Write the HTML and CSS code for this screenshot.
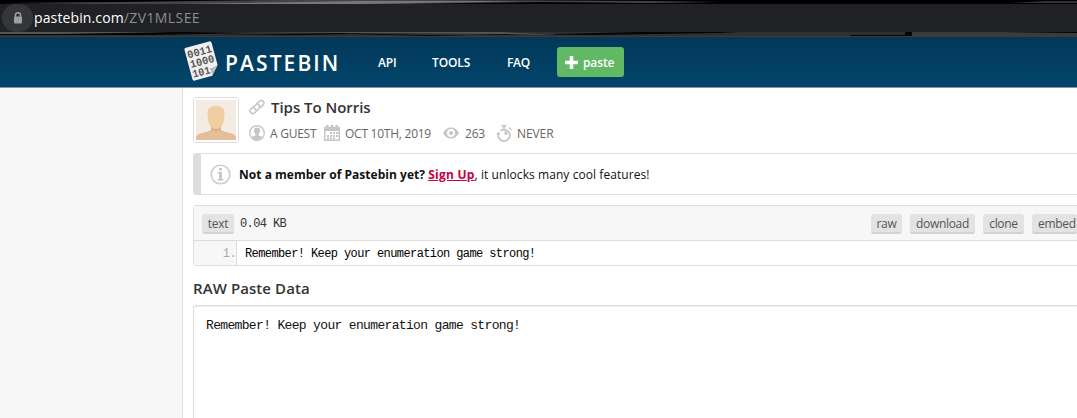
FILE: index.html
```
<!DOCTYPE html>
<html lang="en">
<head>
<meta charset="utf-8">
<title>Tips To Norris - Pastebin.com</title>
<link rel="stylesheet" href="styles.css">
</head>
<body>
<div class="browser">
  <svg class="streaks" width="1077" height="4" viewBox="0 0 1077 4" preserveAspectRatio="none"><path fill="#000" d="M0 0h1077v4H0z"/><path fill="#444" d="M0 3 120 2 280 0H430L650 1 720 2 650 3 540 2 400 4H90z"/><path fill="#777" d="M360 1h160l-40 1-120 2H180z"/><path fill="#333" d="M1010 3 1045 1h32v2z"/></svg>
  <div class="address">
    <span class="lock"><svg width="10" height="12" viewBox="0 0 10 12"><path d="M2.4 5V3.4a2.6 2.6 0 0 1 5.2 0V5" fill="none" stroke="#9aa0a6" stroke-width="1.4"/><rect x="1" y="4.500" width="8" height="7" rx="1" fill="#9aa0a6"/></svg></span>
    <span class="url"><span class="host">pastebin.com</span><span class="path">/ZV1MLSEE</span></span>
  </div>
  <svg class="streaks" width="1077" height="5" viewBox="0 0 1077 5" preserveAspectRatio="none"><path fill="#303030" d="M0 0h1077v5H0z"/><path fill="#050505" d="M0 1 190 0 250 1 150 3H0zM220 3 340 1 420 3H510L640 0H740L720 1 590 3 510 2 430 4 350 2 300 3zM850 3h55V0h7v4H850z"/><path fill="#555" d="M250 1 350 0H500L560 3 500 2 400 1zM0 0h170L60 2H0z"/><path fill="#3b3b3b" d="M912 0h165v4H912z"/><path fill="#000" d="m1000 0h77v1z"/><path fill="#3b3b3b" d="M0 4h1077v1H0z"/></svg>
</div>
<header class="header">
  <svg class="logo" width="38" height="42" viewBox="0 0 38 42"><g transform="rotate(-15 19 21)"><path d="M6 4h25a2 2 0 0 1 2 2v23l-8 9H7a2 2 0 0 1-2-2V5z" fill="#f0f0f0"/><path d="M33 28 25 38q1-6-1-8 5 1 9-2z" fill="#b9b9b9"/><g class="bits"><text x="6.500" y="15" textLength="25" lengthAdjust="spacingAndGlyphs">0011</text><text x="6.500" y="25" textLength="25" lengthAdjust="spacingAndGlyphs">1000</text><text x="6.500" y="35" textLength="18" lengthAdjust="spacingAndGlyphs">101</text></g></g></svg>
  <span class="brand">PASTEBIN</span>
  <nav class="nav"><a class="api">API</a><a class="tools">TOOLS</a><a class="faq">FAQ</a></nav>
  <a class="new-paste"><svg width="13" height="13" viewBox="0 0 13 13"><path d="M4.7 0h3.6v4.7H13v3.6H8.3V13H4.7V8.3H0V4.700h4.700z" fill="#fff"/></svg><span>paste</span></a>
</header>
<main class="page">
  <section class="info">
    <div class="avatar"><svg width="40" height="40" viewBox="0 0 40 40"><path fill="#f4ece3" d="M0 0h40v40H0z"/><path fill="#e4be9a" d="M15 26h10v4q4 2 9 3 5 1 6 4v3H0v-3q1-3 6-4 5-1 9-3z"/><path fill="#dcae83" d="M15 26h10v3q-5 4-10 0z"/><path fill="#f1cda2" d="M11.500 13q0-7 8.500-7t8.500 7q0 8-2 11.500Q24 29 20 29t-6.500-4.500Q11.500 21 11.500 13z"/></svg></div>
    <div class="details">
      <h1><svg width="16" height="16" viewBox="0 0 16 16" fill="none" stroke="#c6c6c6" stroke-width="1.600" stroke-linecap="round"><path d="M6.800 10.800a2.700 2.700 0 0 1-.7-4.300l4.200-4.200a2.400 2.400 0 0 1 3.800 3.600L11.500 8.500M9.200 5.200a2.700 2.700 0 0 1 .7 4.300l-4.200 4.200a2.400 2.400 0 0 1-3.800-3.600L4.500 7.500"/></svg><span>Tips To Norris</span></h1>
      <div class="meta">
        <svg width="16" height="16" viewBox="0 0 16 16"><circle cx="8" cy="8" r="7.300" fill="none" stroke="#c6c6c6" stroke-width="1.400"/><path fill="#c6c6c6" d="M8 2.500c2 0 3 1.200 3 3 0 1.700-.7 3-1.500 3.700v1l3.700 1.500Q11 15 8 15t-5.200-3.300l3.700-1.500v-1C5.700 8.500 5 7.200 5 5.500c0-1.800 1-3 3-3z"/></svg>
        <span class="guest">A GUEST</span>
        <svg width="16" height="16" viewBox="0 0 16 16"><path fill="#c6c6c6" fill-rule="evenodd" d="M0 2h2V0h2.500v2h2V0h3v2h2V0H14v2h2v14H0zM1.500 6v8.500h13V6z"/><path fill="#c6c6c6" d="M6 7h2v2H6zM9 7h2v2H9zM12 7h2v2h-2zM3 10h2v2H3zM6 10h2v2H6zM9 10h2v2H9zM12 10h2v2h-2zM3 12.500h2v2H3zM6 12.500h2v2H6zM9 12.500h2v2H9z"/></svg>
        <span class="date">OCT 10TH, 2019</span>
        <svg width="16" height="16" viewBox="0 0 16 16"><path fill="#c6c6c6" fill-rule="evenodd" d="M0 8q3-5.500 8-5.500T16 8q-3 5.500-8 5.500T0 8zm4 0a4 4 0 0 0 8 0 4 4 0 0 0-8 0z"/><circle cx="8" cy="8" r="2" fill="#c6c6c6"/></svg>
        <span class="views">263</span>
        <svg width="16" height="17" viewBox="0 0 16 17"><path d="M4.600 5.700A5.800 5.800 0 1 1 2.400 9" fill="none" stroke="#c6c6c6" stroke-width="1.700"/><path fill="#c6c6c6" d="M5.500 0h5v1.600H9v2.200H7V1.600H5.500zM12.500 3l1-1L16 4.500l-1 1zM0 9.500l2.300-3L5 9.500zM8.500 6q3.200.3 3.200 3.700H8.500z"/></svg>
        <span class="expires">NEVER</span>
      </div>
    </div>
  </section>
  <div class="notice">
    <svg width="21" height="21" viewBox="0 0 21 21"><circle cx="10.500" cy="10.500" r="9.300" fill="none" stroke="#ccc" stroke-width="1.600"/><path fill="#c8c8c8" d="M9 4h3v2.500H9zM7.500 8H12v7h1.500v1.500h-6V15H9V9.500H7.500z"/></svg>
    <p><b>Not a member of Pastebin yet?</b> <a>Sign Up</a><span class="tail">, it unlocks many cool features!</span></p>
  </div>
  <section class="code">
    <div class="toolbar">
      <span class="button text">text</span><span class="size">0.04 KB</span>
      <div class="actions"><span class="button raw">raw</span><span class="button download">download</span><span class="button clone">clone</span><span class="button embed">embed</span></div>
    </div>
    <div class="line"><span class="number">1.</span><code>Remember! Keep your enumeration game strong!</code></div>
  </section>
  <h2>RAW Paste Data</h2>
  <div class="raw-data">Remember! Keep your enumeration game strong!</div>
</main>
</body>
</html>
```
FILE: styles.css
```
* { box-sizing: border-box; }
body {
  margin: 0;
  height: 418px;
  overflow: hidden;
  background: #f7f7f7;
  color: #111;
  font-family: "Open Sans", "Noto Sans", sans-serif;
  font-size: 12px;
  white-space: nowrap;
  display: flex;
  flex-direction: column;
}
svg { display: block; flex: none; }
.browser { height: 37px; background: #202124; flex: none; }
.address { height: 28px; display: flex; align-items: center; }
.lock {
  width: 31px; height: 28px; margin-left: 2px; border-radius: 14px;
  background: #35363a; display: flex; align-items: center; justify-content: center;
}
.url { margin-left: 1px; font-size: 14px; line-height: 28px; }
.host { color: #fff; letter-spacing: .12px; }
.path { color: #8b8e92; letter-spacing: .4px; }
.header {
  height: 51px; flex: none; padding-left: 183px; display: flex; align-items: center;
  background: linear-gradient(#023859, #02456b); border-bottom: 1px solid #88949c; color: #fff;
}
.logo { margin-top: -3px; }
.bits { font: bold 11px "Liberation Mono", monospace; fill: #555; }
.brand { width: 117px; margin: 1px 0 0 4px; font-size: 21px; font-weight: 600; letter-spacing: 2.1px; }
.nav { display: flex; width: 215px; padding-left: 36px; font-size: 12px; font-weight: 600; letter-spacing: -.1px; }
.api { width: 54px; }
.tools { width: 75px; }
.faq { letter-spacing: -.3px; }
.new-paste {
  width: 67px; height: 30px; padding-left: 8px; border-radius: 3px; background: #61b865;
  display: flex; align-items: center; gap: 5px; font-size: 12px; font-weight: 600; letter-spacing: -.1px;
}
.page {
  flex: 1; margin-left: 182px; padding: 9px 0 0 10px; background: #fff;
  border-left: 1px solid #ddd; display: flex; flex-direction: column;
}
.info { height: 46px; display: flex; }
.avatar { width: 46px; height: 46px; border: 1px solid #ddd; border-radius: 3px; padding: 2px; }
.details { padding-left: 10px; }
h1, h2, p { margin: 0; }
h1 { height: 20px; display: flex; align-items: center; gap: 6px; font-size: 15px; font-weight: 600; letter-spacing: -.03px; color: #333; }
.meta { height: 24px; margin-top: 4px; display: flex; align-items: center; color: #666; gap: 5px; font-size: 12px; letter-spacing: -.25px; }
.guest { width: 49px; }
.date { width: 93px; }
.views { width: 27px; padding-left: 1px; letter-spacing: -.2px; }
.expires { letter-spacing: -.1px; }
.notice {
  height: 42px; margin-top: 10px; padding-left: 9px; border: 1px solid #ddd; border-left-width: 8px;
  border-right: 0; border-radius: 3px 0 0 3px; display: flex; align-items: center; gap: 8px; font-size: 12px;
}
.notice b { letter-spacing: .03px; }
.notice a { color: #c8003c; font-weight: 700; letter-spacing: .25px; text-decoration: underline; }
.tail { letter-spacing: .07px; }
.code { height: 61px; margin-top: 10px; border: 1px solid #ddd; border-right: 0; border-radius: 3px 0 0 3px; }
.toolbar { height: 35px; padding: 2px 0 0 8px; background: #f7f7f7; border-bottom: 1px solid #ddd; display: flex; align-items: center; }
.button {
  height: 20px; line-height: 19px; border-radius: 3px; border-bottom: 2px solid #d2d2d2;
  background: #e3e3e3; color: #555; text-align: center; font-size: 12px; letter-spacing: -.3px;
}
.text { width: 32px; }
.size, .line, .raw-data { font-family: "Liberation Mono", monospace; font-size: 12px; letter-spacing: -.6px; }
.size { margin-left: 6px; color: #333; }
.actions { margin-left: auto; display: flex; gap: 8px; }
.raw { width: 31px; }
.download { width: 65px; }
.clone { width: 41px; }
.embed { width: 45px; padding-left: 6px; text-align: left; }
.line { height: 24px; line-height: 26px; display: flex; color: #000; }
.number { width: 43px; text-align: right; color: #aaa; background: #f7f7f7; border-right: 1px solid #ddd; }
.line code { padding-left: 8px; font: inherit; }
h2 { height: 39px; padding-top: 11px; line-height: 23px; font-size: 15px; font-weight: 600; letter-spacing: .08px; color: #333; }
.raw-data {
  flex: 1; padding: 12px; border: solid #ddd; border-width: 1px 0 0 1px; border-radius: 3px 0 0;
  box-shadow: inset 0 1px 1px #eee; font-size: 13px; letter-spacing: -.66px;
}
```
